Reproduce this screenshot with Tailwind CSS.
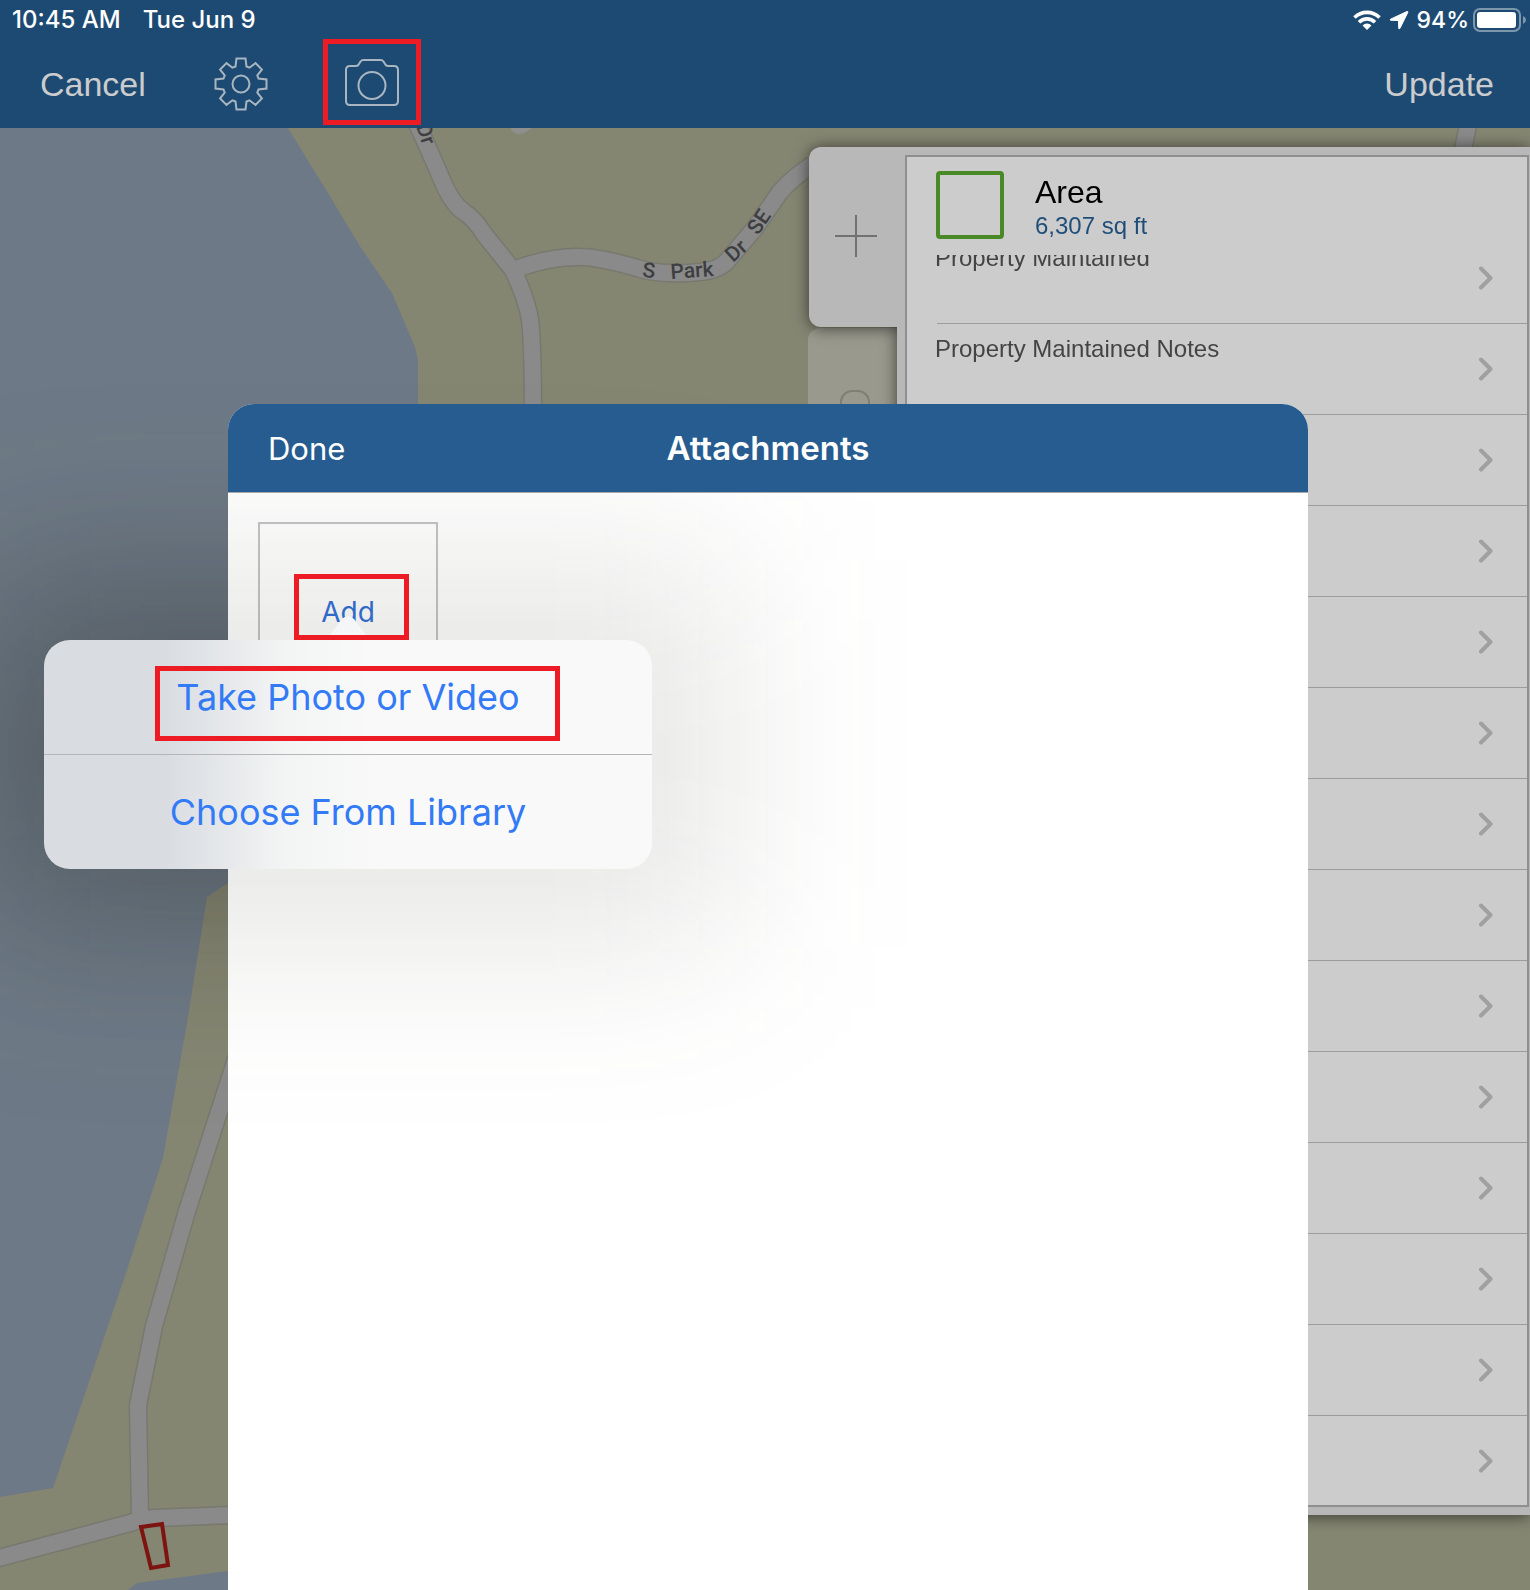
<!DOCTYPE html>
<html lang="en">
<head>
<meta charset="utf-8">
<meta name="viewport" content="width=device-width, initial-scale=1">
<title>Attachments</title>
<script src="https://cdn.jsdelivr.net/npm/@tailwindcss/browser@4"></script>
</head>
<body class="relative flex min-h-screen flex-col overflow-x-hidden bg-[#858672] font-['Liberation_Sans',Arial,sans-serif]">

<header class="relative z-10 bg-[#1d4a72]">
  <div class="flex h-10 items-center justify-between pl-3 pr-[3px] font-['Inter',sans-serif] text-[24px] font-medium text-white">
    <div class="flex gap-[22px]"><span>10:45 AM</span><span>Tue Jun 9</span></div>
    <div class="flex items-center gap-2">
      <svg class="h-5 w-7" viewBox="0 0 28 20" fill="none" stroke="white" stroke-width="3.6" aria-label="Wi-Fi">
        <path d="M1.5 7.5a17.700 17.700 0 0 1 25 0"/><path d="M6 12.200a11.300 11.300 0 0 1 16 0"/><path d="M14 20l-4.500-4.600a6.500 6.500 0 0 1 9 0z" fill="white" stroke="none"/>
      </svg>
      <svg class="h-5 w-5" viewBox="0 0 20 20" fill="white" stroke="white" stroke-width="1" stroke-linejoin="round" aria-label="Location"><path d="M18 1.500 1.500 9.200q-1 .9.300 1.100l7.700.2.200 7.700q.3 1.300 1.200.2L18.800 2.400q.3-1.100-.8-.9z"/></svg>
      <div class="flex items-center gap-1">
        <span class="text-[23px]">94%</span>
        <svg class="h-6 w-[54px]" viewBox="0 0 54 24" aria-label="Battery"><rect x="1" y="1" width="46" height="22" rx="6" fill="none" stroke="#7d97ad" stroke-width="2"/><rect x="4" y="4" width="39" height="16" rx="3" fill="white"/><path d="M50 8q3 1.500 3 4t-3 4z" fill="#7d97ad"/></svg>
      </div>
    </div>
  </div>
  <nav class="flex h-[88px] items-center px-10 text-[34px] text-[#cbcccd]">
    <button type="button">Cancel</button>
    <button type="button" class="ml-[68px]" aria-label="Settings">
      <svg class="size-[54px]" viewBox="-27 -27 54 54" fill="none" stroke="#a9b6c1" stroke-width="2"><path d="M-4.500-25.500H4.500L5.500-17.500 8.500-16.300 14.500-20.900 20.900-14.500 16.300-8.500 17.500-5.500 25.500-4.500V4.500L17.500 5.500 16.300 8.500 20.900 14.500 14.500 20.900 8.500 16.300 5.500 17.500 4.500 25.500H-4.500L-5.500 17.500-8.500 16.300-14.500 20.900-20.900 14.500-16.300 8.500-17.500 5.500-25.500 4.500V-4.500L-17.500-5.500-16.300-8.500-20.900-14.500-14.500-20.900-8.500-16.300-5.500-17.500Z"/><circle r="8.500"/></svg>
    </button>
    <button type="button" class="mb-1 ml-[55px] flex h-[86px] w-[98px] items-center justify-center border-5 border-[#ed1c24]" aria-label="Camera">
      <svg class="h-12 w-[54px]" viewBox="0 0 54 48" fill="none" stroke="#a9b6c1" stroke-width="2"><path d="M5 8h6q2 0 3-2l1.500-2.500Q16.500 2 18.500 2h17q2 0 3 1.500L40 6q1 2 3 2h6q4 0 4 4v31q0 4-4 4H5q-4 0-4-4V12q0-4 4-4z"/><circle cx="27" cy="27.500" r="13.500"/></svg>
    </button>
    <button type="button" class="-mr-1 ml-auto">Update</button>
  </nav>
</header>

<main class="relative flex flex-1 flex-col items-end overflow-hidden">
  <!-- base map -->
  <svg class="absolute inset-0 h-full w-full" viewBox="0 128 1530 1462" preserveAspectRatio="xMinYMin slice" aria-label="Map">
    <defs>
      <filter id="dim" x="-100%" y="-200%" width="300%" height="500%"><feGaussianBlur stdDeviation="80"/></filter>
    </defs>
    <rect y="128" width="1530" height="1462" fill="#858672"/>
    <path fill="#6d7986" d="M0 128H288L331 198 361 248 392 293 415 347 418 360V800L228 883 207 897 187 1023 163 1158 127 1270 53 1488 0 1497ZM128 1590 137 1583 228 1571V1590Z"/>
    <g fill="none" stroke-linejoin="round">
      <g stroke="#78796e" stroke-width="19">
        <path d="M417 124 429 150 442 180Q452 204 464 212 474 218 484 234L513 270Q527 300 530 320 533 345 533 420"/>
        <path d="M513 270Q550 256 581 257 600 257 648 271 672 275 700 272 720 270 728 260L755 228 780 192Q792 178 812 165"/>
        <path d="M248 1022 187 1211 154 1326 138 1405 140 1516M-20 1563 130 1523Q140 1519 155 1518L232 1515M1469 120 1461 160"/>
      </g>
      <g stroke="#8a8a8b" stroke-width="16">
        <path d="M417 124 429 150 442 180Q452 204 464 212 474 218 484 234L513 270Q527 300 530 320 533 345 533 420"/>
        <path d="M513 270Q550 256 581 257 600 257 648 271 672 275 700 272 720 270 728 260L755 228 780 192Q792 178 812 165"/>
        <path d="M248 1022 187 1211 154 1326 138 1405 140 1516M-20 1563 130 1523Q140 1519 155 1518L232 1515M1469 120 1461 160"/>
      </g>
      <path d="M510 126Q512 134 520 134 527 133 534 126" stroke="none" fill="#8f8f90"/>
    </g>
    <g class="font-['Roboto',sans-serif] text-[21px] font-medium" fill="#3d3e40">
      <text transform="translate(642 277) rotate(5)">S</text>
      <text transform="translate(671 279) rotate(-4)">Park</text>
      <text transform="translate(733 263) rotate(-42)">Dr</text>
      <text transform="translate(758 236) rotate(-56)">SE</text>
      <text transform="translate(416 126) rotate(72)">Dr</text>
    </g>
    <rect x="0" y="600" width="680" height="300" fill="#000" fill-opacity=".2" filter="url(#dim)"/>
    <path d="M141 1527 162 1524 168 1565 151 1568Z" fill="none" stroke="#7d1410" stroke-width="4"/>
  </svg>

  <!-- feature form -->
  <aside class="relative mt-[19px] w-full max-w-[721px]">
    <button type="button" class="absolute -left-px top-[181px] flex h-[180px] w-24 justify-center rounded-l-xl bg-[#99998d] pr-0.5 pt-[62px]" aria-label="Shape">
      <span class="block h-12 w-[30px] rounded-xl border-2 border-[#7f7f75]"></span>
    </button>
    <div class="relative flex items-start drop-shadow-[0_1px_8px_rgba(0,0,0,0.6)]">
      <button type="button" class="flex h-[180px] w-[88px] shrink-0 items-center justify-center rounded-l-xl bg-[#b8b8b8] pb-0.5 pl-1.5" aria-label="Add feature">
        <svg class="size-[42px]" viewBox="0 0 42 42" stroke="#717171" stroke-width="2"><path d="M21 0V42M0 21H42"/></svg>
      </button>
      <div class="min-w-0 flex-1 bg-[#b8b8b8] py-2 pl-2 pr-px">
        <section class="border-2 border-[#8f8f8f] bg-[#ccc]">
          <div class="flex h-[98px] gap-[31px] pl-[29px] pt-3.5">
            <span class="size-[68px] rounded-sm border-4 border-[#4a8a26]"></span>
            <div class="pt-[3px]">
              <h2 class="text-[32px] leading-9 text-black">Area</h2>
              <p class="text-[24px] leading-8 text-[#1f4e79]">6,307 sq ft</p>
            </div>
          </div>
          <div class="overflow-hidden">
            <ul id="fields" class="-mt-[22px] text-[24px] text-[#444]"></ul>
          </div>
        </section>
      </div>
    </div>
  </aside>
</main>

<!-- attachments sheet -->
<div class="absolute inset-0 z-20 flex justify-center pl-1.5 pt-[404px]">
  <div role="dialog" aria-labelledby="sheet-title" class="flex w-full max-w-[1080px] flex-col rounded-t-[26px] bg-white font-['Inter',sans-serif]">
    <div class="relative z-10 grid h-[89px] grid-cols-3 items-center rounded-t-[26px] border-b border-[#a8a8a8] bg-[#265c90] px-10 pt-0.5 text-white">
      <button type="button" class="justify-self-start text-[31px]">Done</button>
      <h1 id="sheet-title" class="text-center text-[33px] font-semibold">Attachments</h1>
    </div>
    <div class="p-[30px] pt-[29px]">
      <div class="relative size-[180px] border-2 border-[#c4c4c4]">
        <button type="button" class="flex h-full w-full items-center justify-center text-[28px] text-[#2f6fd8]">Add</button>
        <div class="pointer-events-none absolute left-1/2 top-[36px] h-[388px] w-[768px] -translate-x-1/2 bg-[#3c3c28]/12 blur-[90px]"></div>
        <div role="menu" class="absolute left-1/2 top-[116px] w-[608px] -translate-x-1/2 rounded-[26px] bg-linear-to-r from-[#d9dce1] from-20% via-[#f3f5f5] via-40% to-[#f9f9f9] to-55% text-[36px] text-[#337af6]">
          <svg class="absolute -top-6 left-1/2 h-6 w-14 -translate-x-1/2" viewBox="0 0 56 24" fill="#f4f6f7"><path d="M0 24Q8 23 13 15L22 3Q28-3 34 3L43 15Q48 23 56 24Z"/></svg>
          <button type="button" role="menuitem" class="relative block h-[115px] w-full border-b border-[#b4b6b8]">Take Photo or Video
            <span class="absolute left-[111px] top-[26px] h-[75px] w-[405px] border-5 border-[#ed1c24]"></span>
          </button>
          <button type="button" role="menuitem" class="block h-[114px] w-full">Choose From Library</button>
        </div>
        <span class="absolute left-[34px] top-[50px] h-[66px] w-[115px] border-5 border-[#ed1c24]"></span>
      </div>
    </div>
  </div>
</div>

<script>
  const labels = ['Property Maintained', 'Property Maintained Notes', '', '', '', '', '', '', '', '', '', '', '', ''];
  document.getElementById('fields').innerHTML = labels.map((label, i) => `
    <li class="ml-[30px] ${i < labels.length - 1 ? 'h-[91px] border-b' : 'h-[89px]'} border-[#9c9c9c]">
      <button type="button" aria-label="${label || 'Field ' + (i + 1)}" class="flex h-full w-full items-center justify-between pr-[33px]">
        <span class="-ml-0.5 self-start pt-[7px] leading-9">${label}</span>
        <svg class="h-6 w-4" viewBox="0 0 16 24" fill="none" stroke="#a0a0a2" stroke-width="4" stroke-linecap="round" stroke-linejoin="round"><path d="M3 2.500 12.500 12 3 21.500"/></svg>
      </button>
    </li>`).join('');
</script>
</body>
</html>
